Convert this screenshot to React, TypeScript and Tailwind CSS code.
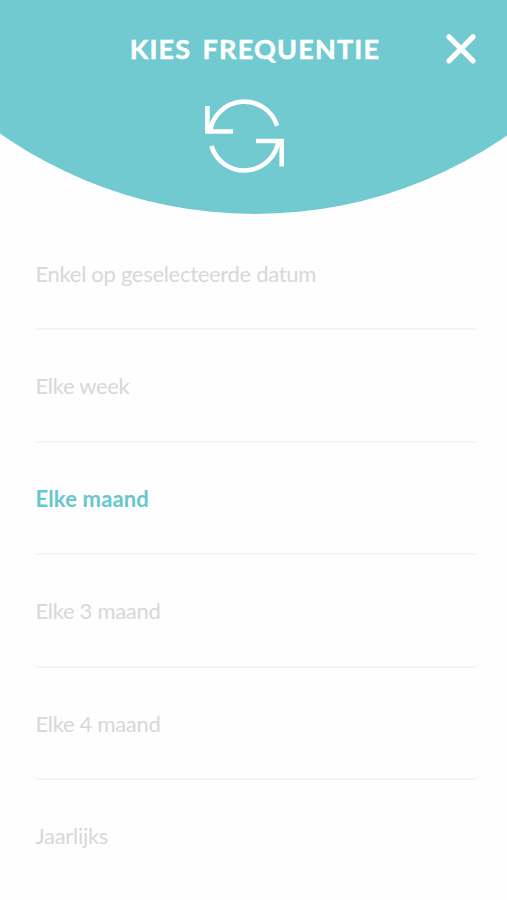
import { useState } from 'react'

const options = [
  'Enkel op geselecteerde datum',
  'Elke week',
  'Elke maand',
  'Elke 3 maand',
  'Elke 4 maand',
  'Jaarlijks',
]

function RepeatIcon() {
  return (
    <svg width="82" height="76" viewBox="0 0 82 76" fill="none" stroke="white" strokeWidth="4.6">
      <path d="M6.1 34A34.4 34.4 0 0 1 73.1 27.8" />
      <path d="M7.4 48A34.4 34.4 0 0 0 74.5 42" />
      <path d="M3.4 8V33.5H29" />
      <path d="M52 43H77.7V68.5" />
    </svg>
  )
}

function CloseIcon() {
  return (
    <svg width="30" height="30" viewBox="0 0 30 30" fill="none" stroke="white" strokeWidth="5.2" strokeLinecap="round">
      <path d="M3 2.8L27 26.8M27 2.8L3 26.8" />
    </svg>
  )
}

function Header() {
  return (
    <header className="h-[214px] bg-[#70cacf] [clip-path:circle(444px_at_255px_-230px)]">
      <div className="grid grid-cols-[1fr_auto_1fr] items-center pt-[33px]">
        <span />
        <h1 className="h-8 whitespace-nowrap pl-[3px] text-[27px] font-bold leading-8 tracking-[1.2px] text-white [-webkit-text-stroke:0.5px_white] [word-spacing:3.5px]">
          KIES FREQUENTIE
        </h1>
        <button aria-label="Sluiten" className="mr-[31px] justify-self-end">
          <CloseIcon />
        </button>
      </div>
      <div className="ml-[204px] mt-[33px]">
        <RepeatIcon />
      </div>
    </header>
  )
}

export default function App() {
  const [selected, setSelected] = useState('Elke maand')

  return (
    <div className="h-[900px] w-[507px] overflow-hidden bg-[#fefefe] font-['Lato',sans-serif]">
      <Header />
      <ul className="ml-9 mr-[31px] mt-[3.5px]">
        {options.map((label) => (
          <li key={label} className="h-[112.5px] border-b-2 border-[#f5f5f5] last:h-[110px] last:border-b-0">
            <button
              onClick={() => setSelected(label)}
              className={
                label === selected
                  ? '-ml-[0.5px] block h-full w-full pt-px text-left text-[22px] font-bold tracking-[0.15px] text-[#66c8cd]'
                  : '-ml-[0.5px] block h-full w-full pt-px text-left text-[22px] tracking-[-0.3px] text-[#d8d8d8]'
              }
            >
              {label}
            </button>
          </li>
        ))}
      </ul>
    </div>
  )
}
